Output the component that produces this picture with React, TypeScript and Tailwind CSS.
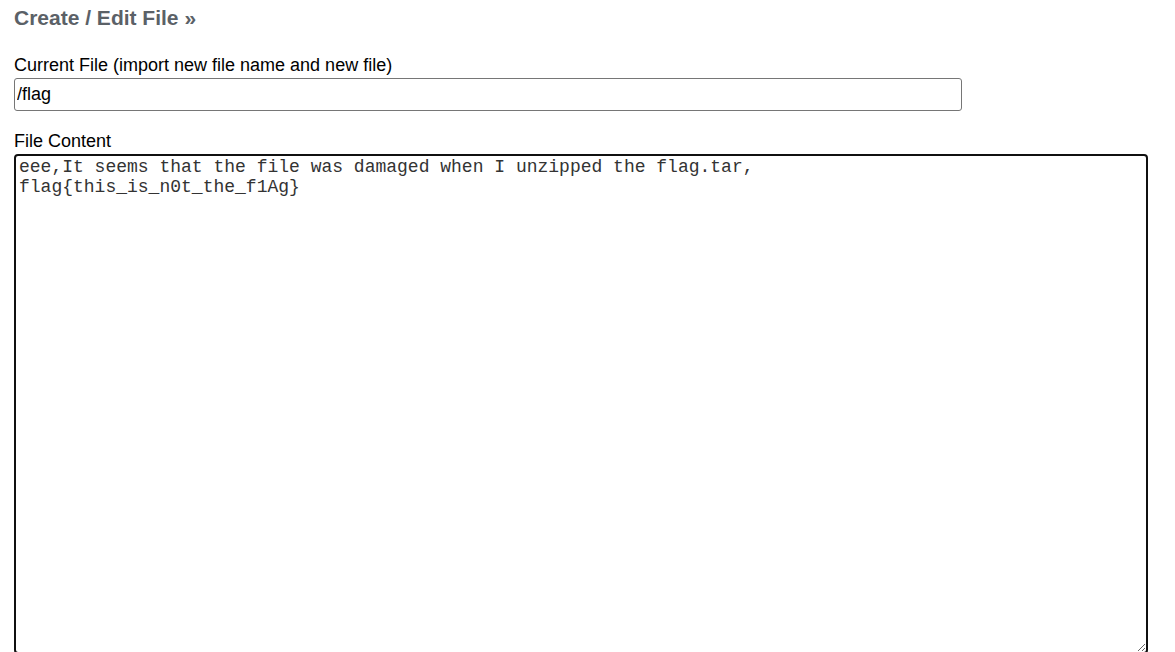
import { useState } from 'react'

export default function App() {
  const [fileName, setFileName] = useState('/flag')
  const [content, setContent] = useState(
    'eee,It seems that the file was damaged when I unzipped the flag.tar,\nflag{this_is_n0t_the_f1Ag}'
  )

  return (
    <div className="bg-white min-h-[652px] px-[14px] pt-[6px] font-['Liberation_Sans',Arial,sans-serif] text-black">
      <h2 className="text-[21px] leading-[24px] font-bold text-[#5b6167]">
        Create / Edit File »
      </h2>

      <form className="mt-[25px] flex flex-col" onSubmit={(e) => e.preventDefault()}>
        <label className="text-[18px] leading-[21px] mb-[2px]">
          Current File (import new file name and new file)
        </label>
        <input
          value={fileName}
          onChange={(e) => setFileName(e.target.value)}
          className="w-[948px] h-[33px] border border-[#767676] rounded-[3px] px-[2px] text-[18px] outline-none"
        />

        <label className="text-[18px] leading-[21px] mt-[20px] mb-[2px]">File Content</label>
        <textarea
          value={content}
          onChange={(e) => setContent(e.target.value)}
          className="w-[1134px] h-[500px] border-2 border-[#101010] rounded-[4px] px-[3px] py-[1px] text-[18px] leading-[20px] text-[#333] font-['Liberation_Mono','Courier_New',monospace] outline-none resize"
        />
      </form>
    </div>
  )
}
